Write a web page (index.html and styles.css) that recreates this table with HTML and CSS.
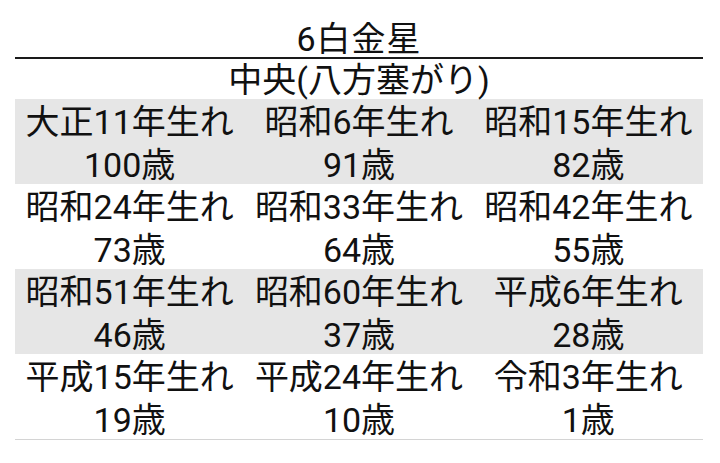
FILE: index.html
```html
<!DOCTYPE html>
<html lang="ja">
<head>
<meta charset="utf-8">
<title>6白金星</title>
<link rel="stylesheet" href="styles.css">
</head>
<body>
<div class="sheet">
  <h1 class="title">6白金星</h1>
  <div class="sub">中央(八方塞がり)</div>
  <div class="grid">
    <div class="row shade">
      <div class="cell"><div>大正11年生れ</div><div>100歳</div></div>
      <div class="cell"><div>昭和6年生れ</div><div>91歳</div></div>
      <div class="cell"><div>昭和15年生れ</div><div>82歳</div></div>
    </div>
    <div class="row">
      <div class="cell"><div>昭和24年生れ</div><div>73歳</div></div>
      <div class="cell"><div>昭和33年生れ</div><div>64歳</div></div>
      <div class="cell"><div>昭和42年生れ</div><div>55歳</div></div>
    </div>
    <div class="row shade">
      <div class="cell"><div>昭和51年生れ</div><div>46歳</div></div>
      <div class="cell"><div>昭和60年生れ</div><div>37歳</div></div>
      <div class="cell"><div>平成6年生れ</div><div>28歳</div></div>
    </div>
    <div class="row">
      <div class="cell"><div>平成15年生れ</div><div>19歳</div></div>
      <div class="cell"><div>平成24年生れ</div><div>10歳</div></div>
      <div class="cell"><div>令和3年生れ</div><div>1歳</div></div>
    </div>
  </div>
</div>
</body>
</html>
```
FILE: styles.css
```css
html, body {
  margin: 0;
  padding: 0;
  background: #ffffff;
}

body {
  font-family: Roboto, "Noto Sans CJK JP", sans-serif;
  color: #111111;
}

.sheet {
  margin-left: 15px;
  width: 688px;
  padding-top: 21px;
}

.title {
  margin: 0;
  font-size: 34px;
  font-weight: 400;
  line-height: 36px;
  letter-spacing: 1px;
  text-align: center;
  border-bottom: 2px solid #1a1a1a;
}

.sub {
  padding-top: 3px;
  font-size: 34px;
  line-height: 37px;
  text-align: center;
}

.grid {
  border-bottom: 1px solid #d4d4d4;
}

.row {
  display: grid;
  grid-template-columns: repeat(3, 1fr);
  height: 85px;
}

.shade {
  background: #e6e6e6;
}

.cell {
  box-sizing: border-box;
  padding-top: 2px;
  text-align: center;
  font-size: 34px;
  line-height: 43px;
  white-space: nowrap;
}
```
